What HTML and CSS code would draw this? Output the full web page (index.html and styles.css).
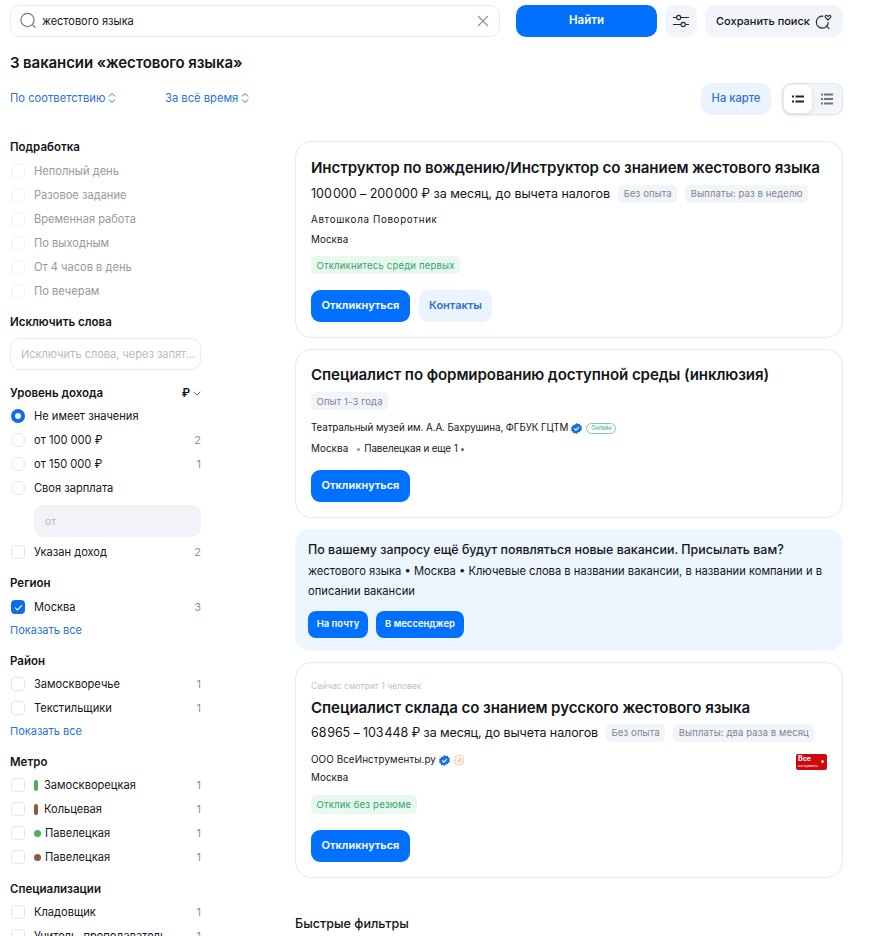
FILE: index.html
```html
<!DOCTYPE html>
<html lang="ru">
<head>
<meta charset="utf-8">
<title>Вакансии</title>
<link rel="stylesheet" href="styles.css">
</head>
<body>
<div class="page">
  <header class="search-row">
    <div class="search-box">
      <svg class="search-icon" viewBox="0 0 18 18" width="18" height="18"><circle cx="8.500" cy="8" r="6.600" fill="none" stroke="#6f7c8a" stroke-width="1.200"/><path d="M13.300 12.600l3.200 3.200" stroke="#6f7c8a" stroke-width="1.200" fill="none"/></svg>
      <span class="search-text">жестового языка</span>
      <svg class="clear-icon" viewBox="0 0 12 12" width="12" height="12"><path d="M1 1l10 10M11 1L1 11" stroke="#8a939c" stroke-width="1.100" fill="none"/></svg>
    </div>
    <button class="btn btn-primary btn-find">Найти</button>
    <button class="btn btn-soft btn-filter"><svg viewBox="0 0 16 14" width="16" height="14"><path d="M0 3.500h3.500M8 3.500h8M0 10.500h8M12.500 10.500h3.500" stroke="#20262b" stroke-width="1.100" fill="none"/><circle cx="5.700" cy="3.500" r="2.100" fill="none" stroke="#20262b" stroke-width="1.100"/><circle cx="10.200" cy="10.500" r="2.100" fill="none" stroke="#20262b" stroke-width="1.100"/></svg></button>
    <button class="btn btn-soft btn-save">Сохранить поиск<svg viewBox="0 0 17 17" width="17" height="17"><path d="M8.300 3.200A6 6 0 1 0 13.300 9" fill="none" stroke="#20262b" stroke-width="1.100"/><path d="M11.300 12.800l3 3" stroke="#20262b" stroke-width="1.100"/><path d="M13 7l-2.500-2.500c-1.100-1.300.7-3 1.900-1.700l.6.600.6-.6c1.200-1.300 3 .4 1.900 1.700z" fill="none" stroke="#20262b" stroke-width="1.100"/></svg></button>
  </header>

  <h1 class="page-title">3 вакансии «жестового языка»</h1>

  <div class="tools-row">
    <a class="sort-link sort-first">По соответствию<svg class="updown" viewBox="0 0 8 12" width="8" height="12"><path d="M1 4.500L4 1.500l3 3M1 7.500l3 3 3-3" fill="none" stroke="#2a72d8" stroke-width="1"/></svg></a>
    <a class="sort-link">За всё время<svg class="updown" viewBox="0 0 8 12" width="8" height="12"><path d="M1 4.500L4 1.500l3 3M1 7.500l3 3 3-3" fill="none" stroke="#2a72d8" stroke-width="1"/></svg></a>
    <button class="btn btn-light btn-map">На карте</button>
    <div class="view-toggle">
      <span class="view-on"><svg viewBox="0 0 12 8" width="12" height="8"><path d="M0 1.500h2M3.500 1.500h8.500M0 6.500h2M3.500 6.500h8.500" stroke="#20262b" stroke-width="2" fill="none"/></svg></span>
      <span class="view-off"><svg viewBox="0 0 12 12" width="12" height="12"><path d="M0 1.500h2M3 1.500h9M0 6h2M3 6h9M0 10.500h2M3 10.500h9" stroke="#6a7580" stroke-width="2" fill="none"/></svg></span>
    </div>
  </div>

  <div class="columns">
    <aside class="sidebar">
      <h3 class="f-head">Подработка</h3>
      <div class="f-list muted">
        <label class="f-row"><i class="box"></i>Неполный день</label>
        <label class="f-row"><i class="box"></i>Разовое задание</label>
        <label class="f-row"><i class="box"></i>Временная работа</label>
        <label class="f-row"><i class="box"></i>По выходным</label>
        <label class="f-row"><i class="box"></i>От 4 часов в день</label>
        <label class="f-row"><i class="box"></i>По вечерам</label>
      </div>

      <h3 class="f-head gap-m">Исключить слова</h3>
      <div class="exclude">Исключить слова, через запят...</div>

      <h3 class="f-head f-head-income">Уровень дохода<span class="currency">₽<svg viewBox="0 0 8 5" width="8" height="5"><path d="M.8.800L4 4l3.200-3.200" fill="none" stroke="#5f6a75" stroke-width="1"/></svg></span></h3>
      <div class="f-list f-list-radio">
        <label class="f-row"><i class="radio radio-on"></i>Не имеет значения</label>
        <label class="f-row"><i class="radio"></i>от 100 000 ₽<b class="cnt">2</b></label>
        <label class="f-row"><i class="radio"></i>от 150 000 ₽<b class="cnt">1</b></label>
        <label class="f-row"><i class="radio"></i>Своя зарплата</label>
      </div>
      <div class="salary-input">от</div>
      <label class="f-row f-row-sal"><i class="box"></i>Указан доход<b class="cnt">2</b></label>

      <h3 class="f-head gap-m">Регион</h3>
      <div class="f-list">
        <label class="f-row"><i class="box box-on"><svg viewBox="0 0 10 8" width="9" height="7"><path d="M1 4l2.800 2.800L9 1.300" fill="none" stroke="#fff" stroke-width="1.200"/></svg></i>Москва<b class="cnt">3</b></label>
      </div>
      <a class="show-all">Показать все</a>

      <h3 class="f-head gap-l">Район</h3>
      <div class="f-list f-list-tight">
        <label class="f-row"><i class="box"></i>Замоскворечье<b class="cnt">1</b></label>
        <label class="f-row"><i class="box"></i>Текстильщики<b class="cnt">1</b></label>
      </div>
      <a class="show-all">Показать все</a>

      <h3 class="f-head gap-l">Метро</h3>
      <div class="f-list f-list-tight">
        <label class="f-row"><i class="box"></i><i class="line line-green"></i>Замоскворецкая<b class="cnt">1</b></label>
        <label class="f-row"><i class="box"></i><i class="line line-brown"></i>Кольцевая<b class="cnt">1</b></label>
        <label class="f-row"><i class="box"></i><i class="dot dot-green"></i>Павелецкая<b class="cnt">1</b></label>
        <label class="f-row"><i class="box"></i><i class="dot dot-brown"></i>Павелецкая<b class="cnt">1</b></label>
      </div>

      <h3 class="f-head gap-n">Специализации</h3>
      <div class="f-list f-list-tight">
        <label class="f-row"><i class="box"></i>Кладовщик<b class="cnt">1</b></label>
        <label class="f-row"><i class="box"></i>Учитель, преподаватель<b class="cnt">1</b></label>
      </div>
    </aside>

    <main class="results">
      <article class="card card-one">
        <h2 class="job-title">Инструктор по вождению/Инструктор со знанием жестового языка</h2>
        <div class="pay-row"><span class="pay">100&#8202;000 – 200&#8202;000 ₽ за месяц, до вычета налогов</span><span class="tag">Без опыта</span><span class="tag">Выплаты: раз в неделю</span></div>
        <div class="company company-one">Автошкола Поворотник</div>
        <div class="place">Москва</div>
        <div class="tag tag-green tag-one">Откликнитесь среди первых</div>
        <div class="actions"><button class="btn btn-primary btn-apply">Откликнуться</button><button class="btn btn-light btn-contacts">Контакты</button></div>
      </article>

      <article class="card card-two">
        <h2 class="job-title">Специалист по формированию доступной среды (инклюзия)</h2>
        <div class="tag tag-solo">Опыт 1-3 года</div>
        <div class="company company-two">Театральный музей им. А.А. Бахрушина, ФГБУК ГЦТМ
          <svg class="verified" viewBox="0 0 12 12" width="11" height="11"><path d="M6 0l1.600 1 1.900-.1.800 1.700 1.600 1-.4 1.900.4 1.900-1.600 1-.8 1.700-1.900-.1L6 12l-1.600-1-1.900.1-.8-1.700-1.600-1L.5 6.500.1 4.600l1.600-1 .8-1.700 1.900.1z" fill="#1a6fe0"/><path d="M3.500 6l1.800 1.800 3.300-3.400" fill="none" stroke="#fff" stroke-width="1.200"/></svg>
          <span class="online">Онлайн</span></div>
        <div class="place place-two">Москва<span class="metro"><i class="mini mini-green"></i>Павелецкая и еще 1<i class="mini mini-brown"></i></span></div>
        <div class="actions actions-two"><button class="btn btn-primary btn-apply">Откликнуться</button></div>
      </article>

      <section class="banner">
        <h2 class="banner-title">По вашему запросу ещё будут появляться новые вакансии. Присылать вам?</h2>
        <p class="banner-text">жестового языка • Москва • Ключевые слова в названии вакансии, в названии компании и в описании вакансии</p>
        <div class="banner-actions"><button class="btn btn-primary btn-small btn-mail">На почту</button><button class="btn btn-primary btn-small btn-msg">В мессенджер</button></div>
      </section>

      <article class="card card-three">
        <div class="watching">Сейчас смотрит 1 человек</div>
        <h2 class="job-title">Специалист склада со знанием русского жестового языка</h2>
        <div class="pay-row"><span class="pay pay-three">68&#8202;965 – 103&#8202;448 ₽ за месяц, до вычета налогов</span><span class="tag">Без опыта</span><span class="tag">Выплаты: два раза в месяц</span></div>
        <div class="company-line">
          <div class="company company-three">ООО ВсеИнструменты.ру
            <svg class="verified" viewBox="0 0 12 12" width="11" height="11"><path d="M6 0l1.600 1 1.900-.1.800 1.700 1.600 1-.4 1.900.4 1.900-1.600 1-.8 1.700-1.900-.1L6 12l-1.600-1-1.900.1-.8-1.700-1.600-1L.5 6.500.1 4.600l1.600-1 .8-1.700 1.900.1z" fill="#1a6fe0"/><path d="M3.500 6l1.800 1.800 3.300-3.400" fill="none" stroke="#fff" stroke-width="1.200"/></svg>
            <svg class="award" viewBox="0 0 10 10" width="10" height="10"><rect x=".6" y=".6" width="8.800" height="8.800" rx="2.800" fill="#fff6ea" stroke="#f3c08a" stroke-width=".8"/><path d="M6 2.800v3.400H3.500" fill="none" stroke="#eda453" stroke-width=".9"/></svg>
          </div>
          <span class="logo"><span class="logo-big">Все</span><span class="logo-small">инструменты</span><i class="logo-dot"></i></span>
        </div>
        <div class="place place-three">Москва</div>
        <div class="tag tag-green tag-three">Отклик без резюме</div>
        <div class="actions actions-three"><button class="btn btn-primary btn-apply">Откликнуться</button></div>
      </article>

      <h2 class="quick-title">Быстрые фильтры</h2>
    </main>
  </div>
</div>
</body>
</html>
```

FILE: styles.css
```css
* { box-sizing: border-box; }
html, body { margin: 0; padding: 0; height: 936px; overflow: hidden; background: #fff; }
body { font-family: Inter, "Noto Sans", sans-serif; color: #131619; font-size: 11.5px; }
.page { width: 875px; padding: 5px 32px 0 10px; }
h1, h2, h3, p { margin: 0; }
a { color: #2a72d8; }
i { font-style: normal; display: inline-block; flex: none; }

.btn { border: 0; font-family: inherit; font-weight: 600; display: inline-flex; align-items: center; justify-content: center; padding: 0 0 2px; }
.btn-primary { background: #0070ff; color: #fff; }
.btn-soft { background: #f1f4f9; color: #131619; }
.btn-light { background: #ebf4fe; color: #2a72d8; }

.search-row { display: flex; height: 32px; }
.search-box { width: 490px; border: 1px solid #e9ebee; border-radius: 10px; display: flex; align-items: center; padding: 0 10px 0 8px; }
.search-icon { margin-right: 5px; }
.search-text { flex: 1; font-size: 11px; }
.btn-find { width: 141px; margin-left: 16px; border-radius: 10px; font-size: 11.500px; }
.btn-filter { width: 32px; margin-left: 8px; border-radius: 10px; padding: 0; }
.btn-save { width: 138px; margin-left: 8px; border-radius: 10px; font-size: 11px; font-weight: 500; gap: 5px; padding: 0; }

.page-title { font-size: 15px; font-weight: 600; line-height: 20px; margin-top: 16px; letter-spacing: -.1px; }

.tools-row { display: flex; align-items: center; height: 32px; margin-top: 10px; }
.sort-link { font-size: 11.200px; display: inline-flex; align-items: center; gap: 3px; margin-top: -2px; }
.sort-first { width: 155px; }
.btn-map { width: 70px; height: 32px; margin-left: auto; border-radius: 10px; font-size: 11.200px; font-weight: 500; }
.view-toggle { width: 61px; height: 32px; margin-left: 11px; border-radius: 9px; background: #f1f4f9; border: 1px solid #e3e6ea; display: flex; box-shadow: 0 1px 3px rgba(0,0,0,.06); }
.view-on { width: 28px; margin: 1px 0 1px 1px; height: 28px; background: #fff; border-radius: 7px; display: flex; align-items: center; justify-content: center; box-shadow: 0 1px 4px rgba(0,0,0,.1); }
.view-off { flex: 1; display: flex; align-items: center; justify-content: center; }

.columns { display: flex; margin-top: 26px; }
.sidebar { width: 191px; margin-right: 94px; }
.results { width: 548px; }

.f-head { font-size: 11.500px; font-weight: 600; line-height: 16px; height: 16px; margin-top: -2px; }
.f-head.gap-m { margin-top: 11px; }
.f-head.gap-n { margin-top: 12px; }
.f-head.gap-l { margin-top: 15px; }
.f-head-income { margin-top: 15px; display: flex; justify-content: space-between; align-items: center; }
.currency { display: inline-flex; align-items: center; gap: 3px; }
.f-list { margin-top: 4px; }
.f-list-tight { margin-top: 3px; }
.f-list-radio { margin-top: 3px; }
.muted { color: #94999e; }
.f-row { display: flex; align-items: center; height: 24px; font-size: 11.100px; }
.box { width: 14px; height: 14px; border: 1px solid #e3e5e8; border-radius: 3.500px; margin: 0 10px 0 0; position: relative; left: 1px; }
.muted .box { border-color: #f0f1f3; }
.box-on { background: #0a6ee6; border-color: #0a6ee6; display: inline-flex; align-items: center; justify-content: center; }
.radio { width: 14px; height: 14px; border: 1px solid #e3e5e8; border-radius: 50%; margin-right: 10px; position: relative; left: 1px; }
.radio-on { border: 4px solid #0a6ee6; }
.cnt { margin-left: auto; font-weight: 400; color: #8a939c; font-size: 11px; }
.exclude { margin-top: 8px; height: 32px; border: 1px solid #e9ebee; border-radius: 10px; font-size: 11px; color: #b3bbc4; display: flex; align-items: center; padding-left: 10px; white-space: nowrap; overflow: hidden; }
.salary-input { height: 32px; margin: 5px 0 3px 24px; background: #f1f3f9; border-radius: 9px; color: #b3bbc4; font-size: 10.500px; display: flex; align-items: center; padding-left: 11px; }
.show-all { display: block; font-size: 11px; line-height: 16px; margin-top: 3px; }
.line { width: 4px; height: 11px; border-radius: 2px; margin-right: 6px; }
.line-green { background: #4fae5a; }
.line-brown { background: #8e5a3e; }
.dot { width: 7px; height: 7px; border-radius: 50%; margin-right: 4px; }
.dot-green { background: #4fae5a; }
.dot-brown { background: #8e5a3e; }

.card { border: 1px solid #e7e9ec; border-radius: 16px; padding: 0 15px; margin-bottom: 11px; }
.card-one { height: 197px; padding-top: 15px; }
.card-two { height: 169px; padding-top: 14px; }
.card-three { height: 216px; padding-top: 17px; }
.job-title { font-size: 15.100px; font-weight: 600; line-height: 21px; letter-spacing: -.1px; white-space: nowrap; }
.pay-row { display: flex; align-items: center; margin-top: 6px; height: 19px; }
.pay { font-size: 12.500px; margin-right: 8px; white-space: nowrap; letter-spacing: -.02px; }
.pay-three { letter-spacing: -.1px; }
.tag { display: inline-flex; align-items: center; height: 18px; padding: 0 5.500px; background: #f1f4f9; color: #7d858d; border-radius: 5px; font-size: 9.500px; margin-right: 8px; letter-spacing: .12px; white-space: nowrap; }
.tag-green { display: flex; width: max-content; background: #e9f8ee; color: #29a65f; margin-top: 8px; letter-spacing: .2px; }
.tag-one { margin-top: 9px; }
.tag-solo { display: flex; width: max-content; margin-top: 7px; }
.company { font-size: 9.800px; line-height: 14px; margin-top: 10px; letter-spacing: .1px; }
.company-one { letter-spacing: .65px; }
.place { font-size: 9.800px; line-height: 14px; margin-top: 6px; letter-spacing: .1px; }
.company-two { display: flex; align-items: center; gap: 3px; margin-top: 11px; letter-spacing: -.08px; white-space: nowrap; }
.verified { flex: none; }
.online { font-size: 5.500px; letter-spacing: 0; color: #2fa868; border: 1px solid #7dcda2; border-radius: 6px; padding: 0 4px; line-height: 9px; margin-left: 1px; }
.place-two { display: flex; align-items: center; margin-top: 7px; }
.metro { display: inline-flex; align-items: center; margin-left: 9px; letter-spacing: -.1px; }
.mini { width: 3px; height: 3px; border-radius: 50%; margin: 0 4px 0 0; }
.mini-green { background: #6cb07a; }
.mini-brown { background: #8e5a3e; margin: 0 0 0 3px; }
.actions { display: flex; gap: 9px; margin-top: 16px; }
.actions-two { margin-top: 14px; }
.actions-three { margin-top: 16px; }
.btn-apply { width: 99px; height: 32px; border-radius: 9px; font-size: 11px; font-weight: 600; }
.btn-contacts { width: 73px; height: 32px; border-radius: 9px; font-size: 11px; }

.banner { height: 122px; margin-bottom: 11px; background: #edf5fe; border-radius: 16px; padding: 13px 13px 0; }
.banner-title { font-size: 12.450px; font-weight: 500; line-height: 16px; white-space: nowrap; }
.banner-text { font-size: 11.200px; line-height: 20px; margin-top: 3px; }
.banner-actions { display: flex; gap: 8px; margin-top: 10px; }
.btn-small { height: 27px; border-radius: 8px; font-size: 9.500px; }
.btn-mail { width: 60px; }
.btn-msg { width: 88px; }

.watching { font-size: 8.500px; line-height: 12px; color: #b9c1ca; }
.card-three .job-title { margin-top: 5px; }
.card-three .pay-row { margin-top: 5px; }
.company-line { display: flex; justify-content: space-between; align-items: flex-start; margin-top: 11px; height: 14px; }
.company-three { display: flex; align-items: center; gap: 3px; margin-top: 0; }
.award { flex: none; margin-left: 1px; }
.logo { position: relative; width: 31px; height: 16px; background: #cc0a10; border-radius: 2px; color: #fff; display: block; margin-top: 1px; }
.logo-big { position: absolute; left: 2px; top: 1px; font-size: 7px; font-weight: 700; line-height: 8px; }
.logo-small { position: absolute; left: 2px; top: 10px; font-size: 3px; line-height: 4px; }
.logo-dot { position: absolute; right: 3px; top: 6px; width: 3px; height: 3px; background: #fff; opacity: .8; border-radius: 50%; }
.place-three { margin-top: 4px; }
.tag-three { margin-top: 10px; height: 19px; }
.quick-title { font-size: 12.600px; font-weight: 500; line-height: 18px; margin-top: 37px; }
```
